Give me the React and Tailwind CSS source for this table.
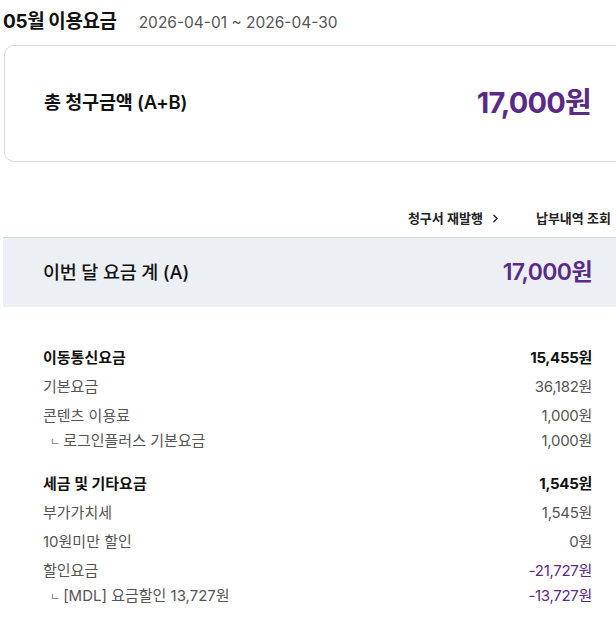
import { ChevronRight } from "lucide-react";

const font = { fontFamily: 'Inter, "Noto Sans CJK KR", sans-serif' };

function Row({ label, value, bold, purple, sub }) {
  return (
    <div className={`flex items-center justify-between ${sub ? "h-[21px]" : "h-[29px]"}`}>
      <span
        className={`text-[15px] ${bold ? "font-bold text-[#111]" : "text-[#555]"} ${sub ? "pl-[7px]" : ""}`}
      >
        {sub && <span className="mr-[3px] text-[11px] text-[#777]">ㄴ</span>}
        {label}
      </span>
      <span
        className={`text-[15px] tracking-[-0.3px] ${bold ? "font-bold text-[#111]" : purple ? "text-[#5b2a86]" : "text-[#555]"}`}
      >
        {value}
      </span>
    </div>
  );
}

export default function App() {
  return (
    <div className="w-[627px] bg-white pl-[3px] pt-[8px] pb-[20px]" style={font}>
      {/* Title */}
      <div className="flex items-baseline gap-[22px]">
        <h1 className="text-[19px] font-bold tracking-[-0.4px] text-[#111]">05월 이용요금</h1>
        <span className="text-[15.5px] text-[#555]">2026-04-01 ~ 2026-04-30</span>
      </div>

      {/* Total card */}
      <div className="ml-[1px] mt-[8px] flex h-[117px] items-center justify-between rounded-[10px] border border-[#dcdcdc] pl-[39px] pr-[35px]">
        <span className="text-[18.5px] font-semibold tracking-[-0.2px] text-[#111]">총 청구금액 (A+B)</span>
        <span className="text-[29px] font-bold tracking-[-0.8px] text-[#5b2a86]">17,000원</span>
      </div>

      {/* Links */}
      <div className="mt-[47px] flex items-center justify-end gap-[34px] pr-[16px] text-[13px] font-semibold text-[#222]">
        <span className="flex items-center gap-[6px]">
          청구서 재발행
          <ChevronRight size={13} strokeWidth={2.5} />
        </span>
        <span>납부내역 조회</span>
      </div>

      {/* Month sum */}
      <div className="mt-[9px] flex h-[70px] items-center justify-between border-t border-[#d6d9de] bg-[#eceff4] pl-[40px] pr-[35px]">
        <span className="text-[18.5px] font-medium tracking-[-0.2px] text-[#111]">이번 달 요금 계 (A)</span>
        <span className="text-[23px] font-semibold tracking-[-0.6px] text-[#5b2a86]">17,000원</span>
      </div>

      {/* Detail */}
      <div className="mt-[37px] pl-[40px] pr-[35px]">
        <Row label="이동통신요금" value="15,455원" bold />
        <Row label="기본요금" value="36,182원" />
        <Row label="콘텐츠 이용료" value="1,000원" />
        <Row label="로그인플러스 기본요금" value="1,000원" sub />

        <div className="h-[18px]" />
        <Row label="세금 및 기타요금" value="1,545원" bold />
        <Row label="부가가치세" value="1,545원" />
        <Row label="10원미만 할인" value="0원" />
        <Row label="할인요금" value="-21,727원" purple />
        <Row label="[MDL] 요금할인 13,727원" value="-13,727원" purple sub />
      </div>
    </div>
  );
}
